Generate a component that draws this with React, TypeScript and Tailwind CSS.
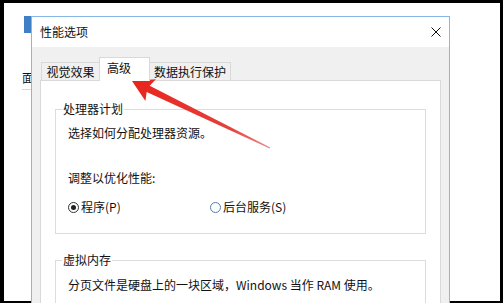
import React from "react";

const font = { fontFamily: '"Noto Sans CJK SC", "Noto Sans", sans-serif' };

function Radio({ checked, label }: { checked?: boolean; label: string }) {
  return (
    <div className="flex items-center h-[16px]">
      <span
        className={
          "w-[11px] h-[11px] rounded-full border bg-white flex items-center justify-center " +
          (checked ? "border-[#333333]" : "border-[#4f7fb3]")
        }
      >
        {checked && <span className="w-[5px] h-[5px] rounded-full bg-[#222222]" />}
      </span>
      <span className="ml-[2px]">{label}</span>
    </div>
  );
}

function CloseIcon() {
  return (
    <svg width="10" height="10" viewBox="0 0 10 10" className="block">
      <path d="M0.5 0.5 L9.5 9.5 M9.5 0.5 L0.5 9.5" stroke="#111" strokeWidth="1" fill="none" />
    </svg>
  );
}

export default function App() {
  return (
    <div
      className="relative w-[503px] h-[303px] overflow-hidden bg-white text-[12px] leading-[16px] text-[#111111]"
      style={font}
    >
      {/* window behind the dialog */}
      <div className="absolute left-[24px] top-[16px] w-[7px] h-[17px] bg-[#3f7fc6]" />
      <div className="absolute left-[22px] top-[70px] text-[12px] leading-[16px]">面</div>
      <div className="absolute left-[22px] top-[89px] w-[10px] h-px bg-[#d9d9d9]" />

      <div className="h-full border-black border-t-[3px] border-l-[4px] border-r-[3px] border-b-[2px] pl-[27px] pt-[13px]">
        {/* dialog */}
        <div className="relative w-[419px] h-[400px] border-t border-l border-r border-[#86b8e6] bg-[#f0f0f0]">
          <div className="h-[30px] bg-white flex items-center justify-between pl-[8px] pr-[8px]">
            <span>性能选项</span>
            <CloseIcon />
          </div>

          <div className="pt-[10px] pl-[8px]">
            <div className="flex items-end pl-[1px]">
              <div className="w-[58px] h-[18px] border-t border-l border-[#d9d9d9] bg-[#f0f0f0] pt-[1px] text-center">
                视觉效果
              </div>
              <div className="relative z-10 w-[51px] h-[24px] -mb-px border-t border-l border-r border-[#d9d9d9] bg-white pt-[2px] pl-[7px]">
                高级
              </div>
              <div className="w-[81px] h-[18px] border-t border-r border-[#d9d9d9] bg-[#f0f0f0] pt-[1px] text-center">
                数据执行保护
              </div>
            </div>

            <div className="w-[401px] h-[300px] border border-[#d9d9d9] bg-white pt-[20px] px-[14px]">
              <fieldset className="border border-[#dcdcdc] pl-[12px] pb-[18px]">
                <legend className="-ml-[6px] px-[1px] leading-[16px]">处理器计划</legend>
                <div className="mt-[8px]">选择如何分配处理器资源。</div>
                <div className="mt-[29px]">调整以优化性能:</div>
                <div className="mt-[13px] flex">
                  <div className="w-[142px]">
                    <Radio checked label="程序(P)" />
                  </div>
                  <Radio label="后台服务(S)" />
                </div>
              </fieldset>

              <fieldset className="mt-[18px] border border-[#dcdcdc] pl-[12px] pb-[18px]">
                <legend className="-ml-[6px] px-[1px] leading-[16px]">虚拟内存</legend>
                <div className="mt-[9px]">分页文件是硬盘上的一块区域，Windows 当作 RAM 使用。</div>
              </fieldset>
            </div>
          </div>
        </div>
      </div>

      {/* red annotation arrow */}
      <svg className="absolute left-0 top-0 pointer-events-none" width="503" height="303" viewBox="0 0 503 303">
        <defs>
          <linearGradient id="arr" x1="132" y1="81" x2="270" y2="148" gradientUnits="userSpaceOnUse">
            <stop offset="0" stopColor="#e8241c" />
            <stop offset="0.7" stopColor="#e4403a" />
            <stop offset="1" stopColor="#e98a88" />
          </linearGradient>
        </defs>
        <polygon
          points="132,81 155.9,79.3 149.7,85.7 270.3,147.4 269.7,148.6 146.7,92.1 145.4,100.9"
          fill="url(#arr)"
        />
      </svg>
    </div>
  );
}
